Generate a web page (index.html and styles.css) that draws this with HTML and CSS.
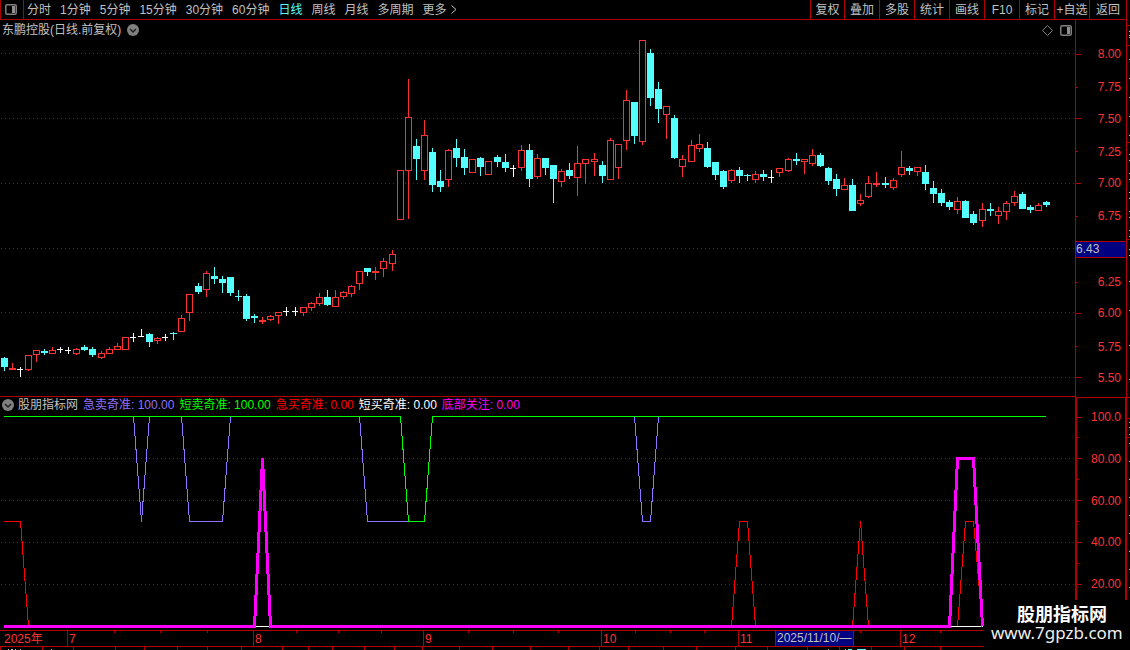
FILE: index.html
```html
<!DOCTYPE html>
<html lang="zh-CN">
<head>
<meta charset="utf-8">
<title>东鹏控股 日线</title>
<link rel="stylesheet" href="styles.css">
</head>
<body>
<header class="toolbar">
  <button class="layout-toggle" aria-label="布局">
    <svg width="12" height="11" viewBox="0 0 12 11"><rect x="0.75" y="0.75" width="10.5" height="9.5" rx="1.5" fill="none" stroke="#808080" stroke-width="1.5"/><rect x="7" y="2" width="3" height="7" fill="#909090"/></svg>
  </button>
  <nav class="periods">
    <button>分时</button><button>1分钟</button><button>5分钟</button><button>15分钟</button><button>30分钟</button><button>60分钟</button><button class="active">日线</button><button>周线</button><button>月线</button><button>多周期</button><button class="more">更多<svg width="6" height="9" viewBox="0 0 6 9"><path d="M0.5 0.5L5 4.5L0.5 8.5" fill="none" stroke="#c0c0c0"/></svg></button>
  </nav>
  <div class="actions">
    <button>复权</button><button>叠加</button><button>多股</button><button>统计</button><button>画线</button><button>F10</button><button>标记</button><button>+自选</button><button>返回</button>
  </div>
</header>
<main class="workspace">
  <section class="panel price-panel">
    <svg id="price-chart" class="plot" viewBox="0 20 1075 376" preserveAspectRatio="none" shape-rendering="crispEdges"></svg>
    <div class="panel-head">
      <span>东鹏控股(日线.前复权)</span>
      <button class="round" aria-label="展开"><svg width="12" height="12" viewBox="0 0 12 12"><circle cx="6" cy="6" r="6" fill="#808080"/><path d="M3 5L6 8L9 5" fill="none" stroke="#202020" stroke-width="1.5"/></svg></button>
      <span class="head-icons">
        <svg width="11" height="11" viewBox="0 0 11 11"><path d="M5.5 0.5L10.5 5.5L5.5 10.5L0.5 5.5Z" fill="none" stroke="#808080"/></svg>
        <svg width="12" height="11" viewBox="0 0 12 11"><rect x="0.75" y="0.75" width="10.5" height="9.5" rx="1.5" fill="none" stroke="#808080" stroke-width="1.5"/><rect x="7" y="2" width="3" height="7" fill="#909090"/></svg>
      </span>
    </div>
  </section>
  <aside class="axis price-axis">
    <div class="tick">8.00</div><div class="tick minor">7.75</div><div class="tick">7.50</div><div class="tick minor">7.25</div><div class="tick">7.00</div><div class="tick minor">6.75</div><div class="cursor-value">6.43</div><div class="tick minor">6.25</div><div class="tick">6.00</div><div class="tick minor">5.75</div><div class="tick">5.50</div>
  </aside>
  <section class="panel">
    <svg id="indicator-chart" class="plot" viewBox="0 397 1075 233" preserveAspectRatio="none" shape-rendering="crispEdges"></svg>
    <div class="legend">
      <button class="round" aria-label="展开"><svg width="12" height="12" viewBox="0 0 12 12"><circle cx="6" cy="6" r="6" fill="#808080"/><path d="M3 5L6 8L9 5" fill="none" stroke="#202020" stroke-width="1.5"/></svg></button>
      <span>股朋指标网</span><span class="purple">急卖奇准: 100.00</span><span class="green">短卖奇准: 100.00</span><span class="red">急买奇准: 0.00</span><span class="white">短买奇准: 0.00</span><span class="magenta">底部关注: 0.00</span>
    </div>
  </section>
  <aside class="axis indicator-axis">
    <div class="tick">100.0</div><div class="tick minor"></div><div class="tick">80.00</div><div class="tick minor"></div><div class="tick">60.00</div><div class="tick minor"></div><div class="tick">40.00</div><div class="tick minor"></div><div class="tick">20.00</div>
  </aside>
  <svg id="side-strip" class="side-strip" viewBox="1127 20 3 610" preserveAspectRatio="none" shape-rendering="crispEdges"></svg>
</main>
<footer class="timeline">
  <div class="months">
    <svg id="week-ticks" class="week-ticks" viewBox="0 0 1130 15" preserveAspectRatio="none" shape-rendering="crispEdges"></svg>
    <span class="month year">2025年</span><span class="month">7</span><span class="month">8</span><span class="month">9</span><span class="month">10</span><span class="month m11"><span class="m11-label">11</span><span class="cursor-date">2025/11/10/—</span></span><span class="month">12</span>
  </div>
  <svg id="bottom-strip" class="bottom-strip" viewBox="0 647 1130 3" preserveAspectRatio="none" shape-rendering="crispEdges"></svg>
</footer>
<div class="watermark"><span class="brand">股朋指标网</span><span class="site">www.7gpzb.com</span></div>
<script src="chart.js"></script>
</body>
</html>
```
FILE: styles.css
```css
* { box-sizing: border-box; }

body {
  margin: 0;
  min-height: 100vh;
  display: flex;
  flex-direction: column;
  position: relative;
  overflow: hidden;
  background: #000;
  color: #c0c0c0;
  font: 12px/16px "Liberation Sans", "Noto Sans CJK SC", sans-serif;
}

button {
  margin: 0;
  padding: 0;
  border: 0;
  background: none;
  color: inherit;
  font: inherit;
  white-space: nowrap;
  cursor: pointer;
}

svg { display: block; flex: none; }

.toolbar {
  display: flex;
  height: 20px;
  margin-right: 3px;
  border: 1px solid #b00000;
  border-top: 0;
}

.layout-toggle {
  width: 23px;
  padding: 0 0 1px 4px;
  border-right: 1px solid #b00000;
}

.periods {
  flex: 1;
  display: flex;
  align-items: center;
  gap: 9px;
  padding-left: 3px;
}

.active { color: #54ffff; }

.more { display: flex; align-items: center; gap: 4px; }

.actions { display: flex; }

.actions button {
  width: 35px;
  border-left: 1px solid #b00000;
}

.actions button:first-child { width: 34px; }
.actions button:last-child { width: 37px; }

.workspace {
  flex: 1;
  display: grid;
  grid-template-columns: minmax(0, 1fr) 52px 3px;
  grid-template-rows: minmax(0, 377fr) minmax(0, 233fr);
}

.panel { display: grid; min-height: 0; grid-template-rows: minmax(0, 1fr); }
.price-panel { border-bottom: 1px solid #b00000; }

.plot { grid-area: 1 / 1; width: 100%; height: 100%; }

.panel-head, .legend {
  grid-area: 1 / 1;
  align-self: start;
  display: flex;
  align-items: center;
  gap: 6px;
  padding: 2px 3px 0 2px;
}

.legend { padding-top: 0; gap: 5px; }
.legend .round { margin-right: -1px; }

.head-icons { display: flex; gap: 7px; margin-left: auto; }

.purple { color: #9370ff; }
.green { color: #00ff00; }
.red { color: #ff0000; }
.white { color: #fff; }
.magenta { color: #ff00ff; }

.axis {
  display: flex;
  flex-direction: column;
  justify-content: space-between;
  border: 1px solid #b00000;
  border-width: 0 1px;
  color: #ff3232;
}

.price-axis { padding: 26px 0 11px; }

.indicator-axis {
  grid-column: 2;
  padding: 11px 0 38px;
  border-width: 0 2px;
  border-top: 1px solid #b00000;
}

.tick {
  display: flex;
  align-items: center;
  justify-content: space-between;
  height: 16px;
  padding-right: 5px;
}

.indicator-axis .tick { padding-right: 4px; }

.tick::before {
  content: "";
  width: 5px;
  height: 1px;
  background: #b00000;
}

.tick.minor::before { width: 2px; }
.price-axis .minor { padding-top: 2px; }

.cursor-value {
  height: 17px;
  margin: 1px 0 -1px;
  line-height: 15px;
  border: 1px solid #b00000;
  border-width: 1px 0;
  background: #000080;
  color: #c0c0c0;
}

.side-strip { grid-column: 3; grid-row: 1 / 3; width: 3px; height: 100%; }

.months {
  display: grid;
  grid-template-columns:
    minmax(0, 67fr) minmax(0, 186fr) minmax(0, 170fr) minmax(0, 178fr)
    minmax(0, 137fr) minmax(0, 162fr) minmax(0, 230fr);
  position: relative;
  height: 17px;
  border: 1px solid #b00000;
  border-width: 1px 0;
  color: #ff3232;
}

.week-ticks { position: absolute; inset: 0; width: 100%; height: 100%; }

.month {
  padding-left: 1px;
  border-left: 1px solid #b00000;
  white-space: nowrap;
}

.year { padding-left: 4px; border-left: 0; }
.m11 { display: flex; }
.m11-label { width: 35px; }

.cursor-date {
  position: relative;
  height: 15px;
  line-height: 15px;
  padding: 0 1px;
  border: 1px solid #b00000;
  border-width: 0 1px;
  background: #000080;
  color: #c0c0c0;
}

.bottom-strip { width: 100%; height: 3px; }

.watermark {
  position: absolute;
  right: 0;
  bottom: 0;
  display: flex;
  flex-direction: column;
  width: 146px;
  height: 50px;
  padding: 3px 0 0 7px;
  background: #000;
  color: #fff;
}

.brand { padding-left: 26px; font: bold 18px/20px "Noto Sans CJK SC", sans-serif; }
.site { font: 17px/20px "Noto Sans", sans-serif; color: #eee; }
```
FILE: chart.js
```js
const NS = "http://www.w3.org/2000/svg";

function add(parent, name, attrs) {
  const el = document.createElementNS(NS, name);
  for (const key in attrs) el.setAttribute(key, attrs[key]);
  parent.appendChild(el);
}

function rect(parent, x, y, width, height, fill) {
  add(parent, "rect", { x, y, width, height, fill });
}

function gridLines(svg, rows) {
  rows.forEach(y => add(svg, "path", {
    d: `M1 ${y + 0.5}H1075`, stroke: "#b00000", "stroke-dasharray": "1 3"
  }));
}

// x, high, body top, body bottom, low, kind (r rising, c falling, w flat)
const candles = `4 357 358 367 371 c;12 363 368 370 370 r;20 367 369 370 377 w;28 355 355 370 371 r
36 350 350 355 362 r;44 349 351 353 355 c;52 347 350 354 354 r;60 347 349 350 353 w
68 347 350 351 354 w;76 348 349 354 355 r;84 345 347 350 351 c;92 347 349 355 357 c
101 351 353 358 359 r;109 347 349 354 354 r;117 343 346 350 350 r;125 337 337 350 350 r
133 333 337 338 342 w;141 329 336 337 337 w;149 333 334 342 347 c;157 337 338 341 344 r
165 334 337 338 341 w;173 332 333 334 340 c;181 315 318 332 332 r;189 294 294 313 321 r
198 283 286 292 294 c;206 271 273 290 297 r;214 267 276 279 284 c;222 276 279 283 293 c
230 277 277 293 296 c;238 290 296 297 301 c;246 294 296 319 321 c;254 314 316 318 323 c
262 317 320 322 324 r;270 315 316 320 321 r;278 312 312 316 324 r;286 307 311 312 316 w
295 307 311 312 316 w;303 307 307 313 316 r;311 302 303 308 311 r;319 293 297 304 306 r
327 290 297 305 306 c;335 290 297 307 307 r;343 291 292 297 299 r;351 285 286 294 297 r
359 271 271 284 290 r;367 268 268 272 276 c;375 267 271 273 280 r;383 258 261 269 277 r
392 250 254 264 271 r;400 170 170 220 220 r;408 79 117 171 219 r;416 139 146 159 180 c
424 120 135 171 180 r;432 148 152 185 192 c;440 170 181 187 192 c;448 149 150 180 187 r
456 139 148 158 167 c;464 149 157 168 175 c;472 159 159 173 173 r;480 157 158 167 176 c
488 161 161 175 175 r;497 155 157 162 167 c;505 154 162 168 172 c;513 165 168 169 177 w
521 145 150 168 171 r;529 144 150 179 187 c;537 154 158 177 179 r;545 158 158 168 175 c
553 165 165 179 203 c;561 169 171 182 187 r;569 163 170 176 179 c;577 146 163 178 196 r
585 159 159 164 184 r;594 153 159 162 176 r;602 161 165 176 183 c;610 138 140 180 180 r
618 144 144 168 179 r;626 90 100 141 150 r;634 102 102 136 144 c;642 40 40 142 145 r
650 49 53 98 106 c;658 82 89 109 123 c;666 106 106 115 139 r;674 115 118 158 159 c
682 155 159 167 177 r;691 140 145 162 162 r;699 134 144 149 152 r;707 142 148 167 168 c
715 162 162 175 180 c;723 170 171 187 189 c;731 169 170 181 183 r;739 167 170 176 183 c
747 174 175 176 181 c;755 171 174 180 183 r;763 170 174 177 181 c;771 170 177 178 183 w
779 168 168 173 177 r;788 158 159 171 172 r;796 153 159 161 165 c;804 159 159 162 174 r
812 149 155 164 166 r;820 153 155 166 167 c;828 167 168 181 185 c;836 174 179 189 196 c
844 178 185 190 190 r;852 179 185 211 211 c;860 194 200 204 206 r;868 176 183 197 198 r
876 172 183 185 187 r;885 177 183 185 188 c;893 178 180 188 190 r;901 151 167 175 177 r
909 166 168 171 175 c;917 167 167 172 176 r;925 165 172 184 190 c;933 181 188 194 203 c
941 189 193 203 206 c;949 200 202 207 210 c;957 197 201 210 214 r;965 200 201 218 218 c
973 211 214 223 225 c;982 203 209 221 227 r;990 203 209 211 216 c;998 207 211 216 224 r
1006 201 203 212 220 r;1014 191 196 203 206 r;1022 192 194 209 209 c;1030 205 207 210 213 c
1038 203 205 211 211 r;1046 201 202 205 207 c`;

const colors = { r: "#ff3232", c: "#54ffff", w: "#ffffff" };
const price = document.getElementById("price-chart");
gridLines(price, [53, 118, 183, 248, 312, 377]);

candles.split(/[;\n]/).forEach(row => {
  const parts = row.trim().split(" ");
  const [x, high, top, bottom, low] = parts.map(Number);
  const kind = parts[5];
  const color = colors[kind];
  rect(price, x, high, 1, low - high, color);
  rect(price, x - 3, top, kind === "w" ? 6 : 7, bottom - top, color);
  if (kind === "r" && bottom - top > 2) {
    rect(price, x - 2, top + 1, 5, bottom - top - 2, "#000");
  }
});

const indicator = document.getElementById("indicator-chart");
gridLines(indicator, [458, 500, 542, 584]);

function line(points, stroke, width) {
  add(indicator, "polyline", {
    points, stroke, fill: "none", "stroke-width": width, transform: "translate(0.5 0.5)"
  });
}

line("3.5,416 133,416 141,521 149,416 181,416 189,521 222,521 230,416 359,416 367,521 424,521 432,416 634,416 642,521 650,521 658,416 1045.5,416", "#9370ff", 1);
line("3.5,416 400,416 408,521 424,521 432,416 1045.5,416", "#00ff00", 1);
line("3.5,521 20,521 28,626 731,626 739,521 747,521 755,626 852,626 860,521 868,626 957,626 965,521 973,521 982,626", "#ff0000", 1);
line("3.5,626 982.5,626", "#ffffff", 1);
line("3.5,626 254,626 262,458 270,626 949,626 957,458 973,458 982,626", "#ff00ff", 3);

const weeks = document.getElementById("week-ticks");
[114, 160, 207, 296, 338, 381, 468, 513, 558, 635, 670, 704, 860, 940].forEach(x =>
  rect(weeks, x, 0, 1, 2, "#b00000"));

const bottom = document.getElementById("bottom-strip");
[0, 42, 73, 115, 144, 177, 207, 241, 282, 308, 332, 364, 394, 422, 459, 492, 530,
 568, 599, 628, 663, 696, 735, 767, 807, 839, 871, 904, 940].forEach(x =>
  rect(bottom, x, 647, 1, 3, "#b00000"));
[[8, 1], [11, 2], [15, 1], [20, 1], [51, 1], [828, 1]].forEach(([x, w]) =>
  rect(bottom, x, 649, w, 1, "#c0c0c0"));
[[845, 1], [848, 4], [857, 9]].forEach(([x, w]) =>
  rect(bottom, x, 649, w, 1, "#54ffff"));

const side = document.getElementById("side-strip");
[25, 45, 142, 239, 397, 418, 437].forEach(y => rect(side, 1127, y, 3, 1, "#b00000"));
[31, 35, 37, 59, 78, 97, 116, 135, 154, 160, 173, 179, 192, 198, 211, 217, 230, 236,
 249, 255, 281, 310, 345, 379, 422, 427, 434, 443, 461, 479, 497, 515, 533, 551, 569, 587
].forEach(y => rect(side, 1129, y, 1, 1, "#c0c0c0"));
```
